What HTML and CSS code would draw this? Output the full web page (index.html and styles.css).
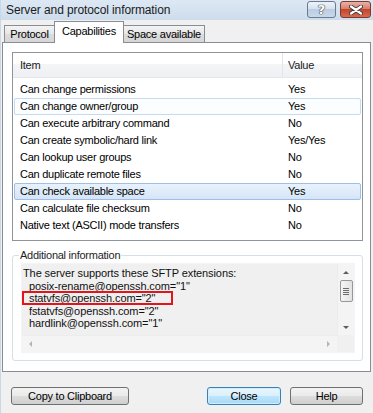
FILE: index.html
```html
<!DOCTYPE html>
<html>
<head>
    <title>Server and protocol information</title>
    <meta charset="utf-8">
    <link rel="stylesheet" href="styles.css">
</head>
<body>
<div class="window">
    <div class="titlebar">
        <span class="title">Server and protocol information</span>
        <div class="caption-btns">
            <span class="cbtn cbtn-help">?</span>
            <span class="cbtn cbtn-close">
                <svg width="14" height="10" viewBox="0 0 14 10">
                    <path d="M2 1.5 L12 8.5 M12 1.5 L2 8.5" stroke="#3b3b3b" stroke-width="4" stroke-linecap="round"/>
                    <path d="M2 1.5 L12 8.5 M12 1.5 L2 8.5" stroke="#fff" stroke-width="2.2" stroke-linecap="round"/>
                </svg>
            </span>
        </div>
    </div>

    <div class="tabs">
        <span class="tab">Protocol</span>
        <span class="tab active">Capabilities</span>
        <span class="tab">Space available</span>
    </div>

    <div class="panel">
        <div class="listview">
            <div class="lv-head">
                <span class="col-item">Item</span>
                <span class="col-value">Value</span>
            </div>
            <div class="lv-row"><span class="col-item">Can change permissions</span><span class="col-value">Yes</span></div>
            <div class="lv-row hot"><span class="col-item">Can change owner/group</span><span class="col-value">Yes</span></div>
            <div class="lv-row"><span class="col-item">Can execute arbitrary command</span><span class="col-value">No</span></div>
            <div class="lv-row"><span class="col-item">Can create symbolic/hard link</span><span class="col-value">Yes/Yes</span></div>
            <div class="lv-row"><span class="col-item">Can lookup user groups</span><span class="col-value">No</span></div>
            <div class="lv-row"><span class="col-item">Can duplicate remote files</span><span class="col-value">No</span></div>
            <div class="lv-row selected"><span class="col-item">Can check available space</span><span class="col-value">Yes</span></div>
            <div class="lv-row"><span class="col-item">Can calculate file checksum</span><span class="col-value">No</span></div>
            <div class="lv-row"><span class="col-item">Native text (ASCII) mode transfers</span><span class="col-value">No</span></div>
        </div>

        <fieldset class="group">
            <legend>Additional information</legend>
            <div class="memo">
                <div class="memo-text">
                    <div class="line">The server supports these SFTP extensions:</div>
                    <div class="line ind">posix-rename@openssh.com="1"</div>
                    <div class="line ind">statvfs@openssh.com="2"</div>
                    <div class="line ind">fstatvfs@openssh.com="2"</div>
                    <div class="line ind">hardlink@openssh.com="1"</div>
                    <div class="mark"></div>
                </div>
                <div class="vscroll">
                    <span class="arrow up"></span>
                    <span class="thumb"><i></i><i></i><i></i><i></i></span>
                    <span class="arrow down"></span>
                </div>
                <div class="hscroll">
                    <span class="arrow left"></span>
                    <span class="arrow right"></span>
                </div>
                <div class="corner"></div>
            </div>
        </fieldset>
    </div>

    <div class="buttons">
        <button class="btn btn-copy">Copy to Clipboard</button>
        <button class="btn btn-close default">Close</button>
        <button class="btn btn-help">Help</button>
    </div>
</div>
</body>
</html>
```

FILE: styles.css
```css
body {
    margin: 0;
    font-family: "Liberation Sans", Arial, sans-serif;
    font-size: 11px;
    letter-spacing: -0.25px;
    color: #000;
}
.window {
    width: 373px;
    height: 413px;
    background: #f0f0f0;
    box-sizing: border-box;
    border-left: 1px solid #c9d7e8;
    overflow: hidden;
}
.titlebar {
    height: 20px;
    display: flex;
    justify-content: space-between;
    align-items: flex-start;
    background: linear-gradient(#dde8f4, #cddcec);
    margin-left: -1px;
}
.title {
    padding: 3px 0 0 6px;
    font-size: 12px;
    letter-spacing: -0.1px;
    color: #1b1b1b;
}
.caption-btns {
    display: flex;
    gap: 4px;
    padding: 1px 2px 0 0;
}
.cbtn {
    height: 17px;
    box-sizing: border-box;
    border: 1px solid #6b7a8e;
    border-radius: 3px;
    display: flex;
    align-items: center;
    justify-content: center;
}
.cbtn-help {
    width: 29px;
    background: linear-gradient(#eef3fa 0%, #d6e2f0 45%, #bccde3 50%, #c9d8ea 100%);
    font-family: "DejaVu Sans", sans-serif;
    font-size: 13px;
    font-weight: bold;
    color: #fff;
    text-shadow: 0 0 1px #3a3a3a, 0 0 1px #3a3a3a, 0 0 1px #3a3a3a;
}
.cbtn-close {
    width: 31px;
    border-color: #7b3b33;
    background: linear-gradient(#eab1a4 0%, #d8806c 45%, #c4442d 50%, #d86a4f 100%);
}

/* tabs */
.tabs {
    display: flex;
    align-items: flex-end;
    height: 21px;
    padding: 1px 0 0 3px;
    position: relative;
    z-index: 1;
}
.tab {
    height: 17px;
    box-sizing: border-box;
    border: 1px solid #898c95;
    border-bottom: none;
    background: linear-gradient(#f4f4f4, #e6e6e6 50%, #dcdcdc 51%, #d6d6d6);
    line-height: 16px;
    text-align: center;
    white-space: nowrap;
}
.tab:first-child { width: 51px; }
.tab:last-child { width: 82px; margin-left: -1px; }
.tab.active {
    width: 70px;
    height: 22px;
    margin: 0 0 -1px -1px;
    background: #fff;
    line-height: 18px;
    position: relative;
}

.panel {
    margin-left: 1px;
    width: 369px;
    height: 330px;
    box-sizing: border-box;
    border: 1px solid #898c95;
    background: #fff;
    padding: 9px 0 0 9px;
}

/* list view */
.listview {
    width: 351px;
    height: 189px;
    box-sizing: border-box;
    border: 1px solid #8f949b;
}
.lv-head {
    display: flex;
    height: 25px;
    margin-bottom: 3px;
    background: linear-gradient(#fff 0%, #fff 45%, #f4f5f7 46%, #eef0f3 100%);
    border-bottom: 1px solid #e4e7eb;
    box-sizing: border-box;
    line-height: 24px;
    color: #222;
}
.lv-head .col-item {
    width: 262px;
    padding-left: 7px;
    border-right: 1px solid #e1e4e8;
}
.lv-head .col-value {
    padding-left: 5px;
}
.lv-row {
    display: flex;
    height: 17px;
    margin: 0 1px 0 1px;
    box-sizing: border-box;
    border: 1px solid transparent;
    border-radius: 2px;
    line-height: 15px;
}
.lv-row .col-item {
    width: 268px;
    padding-left: 5px;
}
.lv-row.hot {
    border-color: #c3dbf4;
    background: #fbfdff;
}
.lv-row.selected {
    border-color: #9ebfe6;
    background: linear-gradient(#e9f2fc, #d5e5f7);
}

/* additional information */
.group {
    width: 351px;
    box-sizing: border-box;
    margin: 6px 0 0 0;
    padding: 0 7px 7px 8px;
    border: 1px solid #d5dfe5;
    border-radius: 3px;
}
.group legend {
    padding: 0 1px;
    margin-left: -2px;
    line-height: 16px;
    color: #1e1e1e;
}
.memo {
    height: 90px;
    box-sizing: border-box;
    border: 1px solid #f4f4f4;
    background: #f0f0f0;
    display: grid;
    grid-template-columns: 1fr 17px;
    grid-template-rows: 1fr 17px;
}
.memo-text {
    position: relative;
    padding: 3px 0 0 1px;
    font-size: 11px;
    letter-spacing: -0.1px;
    line-height: 12.5px;
    color: #111;
    white-space: nowrap;
    overflow: hidden;
}
.memo-text .ind {
    padding-left: 6px;
}
.mark {
    position: absolute;
    left: 0;
    top: 27px;
    width: 151px;
    height: 14px;
    box-sizing: border-box;
    border: 2px solid #e3141b;
}
.vscroll {
    background: #f4f4f4;
    border-left: 1px solid #ececec;
    display: flex;
    flex-direction: column;
    align-items: center;
    padding-top: 7px;
}
.hscroll {
    background: #f4f4f4;
    border-top: 1px solid #ececec;
    display: flex;
    justify-content: space-between;
    align-items: center;
    padding: 0 7px;
}
.corner {
    background: #f0f0f0;
}
.arrow {
    width: 0;
    height: 0;
    border: 3px solid transparent;
}
.arrow.up { border-bottom: 3px solid #5d5d5d; border-top-width: 0; }
.arrow.down { border-top: 3px solid #5d5d5d; border-bottom-width: 0; margin-top: auto; margin-bottom: 6px; }
.arrow.left { border-right: 3px solid #b5b5b5; border-left-width: 0; }
.arrow.right { border-left: 3px solid #b5b5b5; border-right-width: 0; }
.thumb {
    margin-top: 6px;
    width: 13px;
    height: 22px;
    box-sizing: border-box;
    border: 1px solid #979797;
    border-radius: 2px;
    background: linear-gradient(90deg, #f5f5f5, #e2e2e2);
    display: flex;
    flex-direction: column;
    align-items: center;
    justify-content: center;
    gap: 1px;
}
.thumb i {
    display: block;
    width: 6px;
    height: 1px;
    background: #6c6c6c;
}

/* dialog buttons */
.buttons {
    display: flex;
    padding: 15px 10px 0 10px;
}
.btn {
    height: 18px;
    box-sizing: border-box;
    border: 1px solid #707070;
    border-radius: 3px;
    background: linear-gradient(#f2f2f2 0%, #ebebeb 48%, #dddddd 50%, #cfcfcf 100%);
    font-family: "Liberation Sans", Arial, sans-serif;
    font-size: 11px;
    letter-spacing: -0.25px;
    color: #000;
    padding: 0;
    line-height: 15px;
}
.btn-copy { width: 118px; }
.btn-close { width: 74px; margin-left: auto; }
.btn-help { width: 73px; margin-left: 9px; }
.btn.default {
    border-color: #3c7fb1;
    background: linear-gradient(#eaf6fd 0%, #d9f0fc 48%, #bee6fd 50%, #a7d9f5 100%);
    box-shadow: inset 0 0 0 1px #cdeefc;
}
```
